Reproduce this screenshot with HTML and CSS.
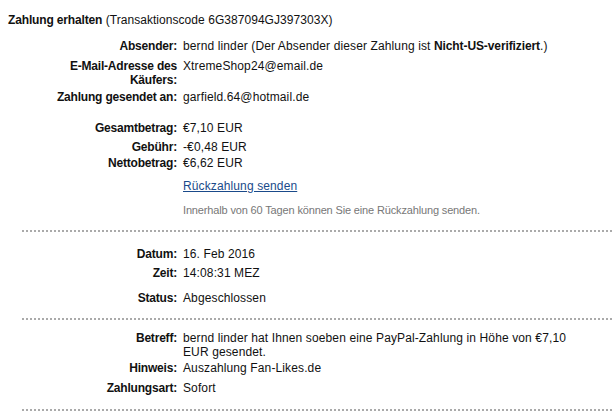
FILE: index.html
```html
<!DOCTYPE html>
<html lang="de">
<head>
<meta charset="utf-8">
<title>Zahlung erhalten</title>
<link rel="stylesheet" href="styles.css">
</head>
<body>
<div class="page">
  <h1 class="title"><b>Zahlung erhalten</b> (Transaktionscode 6G387094GJ397303X)</h1>

  <section class="block block-first">
    <div class="row"><div class="label">Absender:</div><div class="value">bernd linder (Der Absender dieser Zahlung ist <b>Nicht-US-verifiziert</b>.)</div></div>
    <div class="row gap-6"><div class="label">E-Mail-Adresse des Käufers:</div><div class="value">XtremeShop24@email.de</div></div>
    <div class="row gap-3"><div class="label">Zahlung gesendet an:</div><div class="value">garfield.64@hotmail.de</div></div>

    <div class="row gap-17"><div class="label">Gesamtbetrag:</div><div class="value">€7,10 EUR</div></div>
    <div class="row gap-5"><div class="label">Gebühr:</div><div class="value">-€0,48 EUR</div></div>
    <div class="row gap-2"><div class="label">Nettobetrag:</div><div class="value">€6,62 EUR</div></div>
    <div class="row gap-9"><div class="label"></div><div class="value"><a class="link" href="#">Rückzahlung senden</a></div></div>
    <div class="row gap-10"><div class="label"></div><div class="value note">Innerhalb von 60 Tagen können Sie eine Rückzahlung senden.</div></div>
  </section>

  <section class="block block-second">
    <div class="row"><div class="label">Datum:</div><div class="value">16. Feb 2016</div></div>
    <div class="row gap-5"><div class="label">Zeit:</div><div class="value">14:08:31 MEZ</div></div>
    <div class="row gap-11"><div class="label">Status:</div><div class="value">Abgeschlossen</div></div>
  </section>

  <section class="block block-third">
    <div class="row"><div class="label">Betreff:</div><div class="value">bernd linder hat Ihnen soeben eine PayPal-Zahlung in Höhe von €7,10 EUR gesendet.</div></div>
    <div class="row gap-2"><div class="label">Hinweis:</div><div class="value">Auszahlung Fan-Likes.de</div></div>
    <div class="row gap-6"><div class="label">Zahlungsart:</div><div class="value">Sofort</div></div>
  </section>
</div>
</body>
</html>
```

FILE: styles.css
```css
html, body {
  margin: 0;
  padding: 0;
  background: #ffffff;
}

body {
  font-family: "Liberation Sans", Arial, sans-serif;
  font-size: 12px;
  line-height: 14px;
  color: #111111;
}

.page {
  padding: 13px 3px 0 8px;
}

.title {
  margin: 0;
  font-size: 12px;
  font-weight: normal;
  line-height: 14px;
  letter-spacing: 0.05px;
}

.title b {
  font-weight: bold;
  letter-spacing: -0.15px;
}

.block {
  margin-left: 14px;
  padding: 15px 0 14px 0;
  border-bottom: 2px dotted #aaaaaa;
}

.block-first {
  padding-top: 12px;
  padding-bottom: 13px;
}

.block-second {
  padding-bottom: 13px;
}

.block-third {
  padding-top: 11px;
}

.block .row {
  margin-left: -14px;
}

.row {
  display: grid;
  grid-template-columns: 122px 400px;
  column-gap: 6px;
  padding-left: 47px;
}

.label {
  text-align: right;
  font-weight: bold;
  letter-spacing: -0.2px;
}

.value {
  letter-spacing: 0.12px;
}

.value b {
  font-weight: bold;
  letter-spacing: -0.1px;
}

.link {
  color: #1a4a8a;
  text-decoration: underline;
}

.note {
  font-size: 11px;
  letter-spacing: -0.15px;
  color: #777777;
}

.gap-2 { margin-top: 2px; }
.gap-3 { margin-top: 3px; }
.gap-5 { margin-top: 5px; }
.gap-6 { margin-top: 6px; }
.gap-9 { margin-top: 9px; }
.gap-10 { margin-top: 10px; }
.gap-11 { margin-top: 11px; }
.gap-17 { margin-top: 17px; }
```
